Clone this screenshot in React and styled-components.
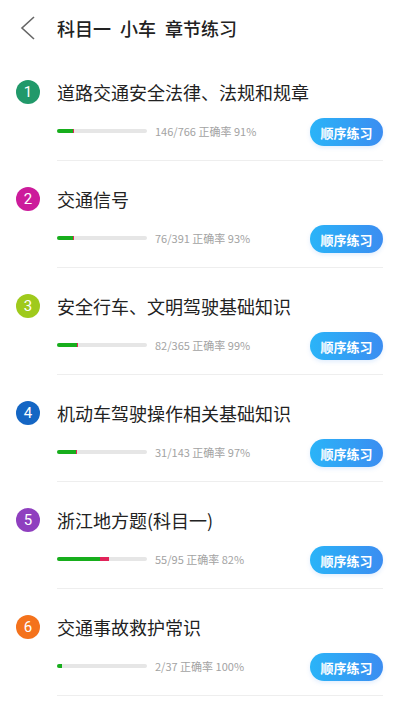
import React from "react";
import styled, { createGlobalStyle } from "styled-components";

const Global = createGlobalStyle`
  html, body { margin: 0; padding: 0; background: #fff; }
  body { font-family: "Noto Sans CJK SC", "Noto Sans", sans-serif; }
`;

const Page = styled.div`
  width: 400px;
  background: #fff;
`;

const Header = styled.div`
  height: 54px;
  display: flex;
  align-items: flex-start;
  padding-top: 15px;
  box-sizing: border-box;
`;

const Back = styled.div`
  width: 57px;
  height: 26px;
  display: flex;
  align-items: center;
  padding-left: 20px;
  box-sizing: border-box;
`;

const Title = styled.div`
  display: flex;
  gap: 9px;
  font-size: 18px;
  line-height: 26px;
  color: #222;
  font-weight: 500;
`;

const Item = styled.div`
  padding: 25px 17px 0 0;
  display: flex;
  flex-direction: column;
`;

const TitleRow = styled.div`
  display: flex;
  align-items: center;
  height: 26px;
`;

const Badge = styled.div`
  width: 24px;
  height: 24px;
  border-radius: 50%;
  background: ${(p) => p.$color};
  color: #fff;
  font-family: "Roboto", "Noto Sans", sans-serif;
  font-size: 15px;
  display: flex;
  align-items: center;
  justify-content: center;
  margin: 0 17px 0 16px;
`;

const ItemTitle = styled.div`
  font-size: 18px;
  color: #222;
  line-height: 26px;
`;

const Body = styled.div`
  margin-left: 57px;
  margin-top: 13px;
  padding-bottom: 14px;
  border-bottom: 1px solid #eeeeee;
  display: flex;
  align-items: center;
  height: 28px;
`;

const Track = styled.div`
  width: 90px;
  height: 4px;
  border-radius: 2px;
  background: #e6e6e6;
  display: flex;
  overflow: hidden;
  margin-top: -2px;
`;

const Seg = styled.div`
  height: 100%;
  background: ${(p) => p.$color};
`;

const Stats = styled.div`
  margin-left: 8px;
  font-size: 11px;
  color: #a3a3a3;
  flex: 1;
  margin-top: -2px;
`;

const Btn = styled.button`
  width: 73px;
  height: 28px;
  border: none;
  border-radius: 14px;
  background: linear-gradient(90deg, #2ab4f8 0%, #3b8df1 100%);
  color: #fff;
  font-family: "Noto Sans CJK SC", sans-serif;
  font-size: 13px;
  font-weight: 700;
  padding: 0;
  box-shadow: 0 2px 4px rgba(60, 140, 240, 0.15);
`;

const data = [
  { n: 1, color: "#21996a", title: "道路交通安全法律、法规和规章", done: 146, total: 766, rate: 91 },
  { n: 2, color: "#cc1b9b", title: "交通信号", done: 76, total: 391, rate: 93 },
  { n: 3, color: "#9fca1c", title: "安全行车、文明驾驶基础知识", done: 82, total: 365, rate: 99 },
  { n: 4, color: "#1466c4", title: "机动车驾驶操作相关基础知识", done: 31, total: 143, rate: 97 },
  { n: 5, color: "#8f3fbf", title: "浙江地方题(科目一)", done: 55, total: 95, rate: 82 },
  { n: 6, color: "#f4721c", title: "交通事故救护常识", done: 2, total: 37, rate: 100 },
];

export default function App() {
  return (
    <Page>
      <Global />
      <Header>
        <Back>
          <svg width="16" height="24" viewBox="0 0 16 24">
            <polyline points="14,1 2,12 14,23" fill="none" stroke="#666" strokeWidth="1.6" />
          </svg>
        </Back>
        <Title>
          <span>科目一</span>
          <span>小车</span>
          <span>章节练习</span>
        </Title>
      </Header>
      {data.map((d) => {
        const correct = Math.round(d.done * d.rate / 100);
        const wrong = d.done - correct;
        const g = Math.max((correct / d.total) * 90, 4);
        const r = (wrong / d.total) * 90;
        return (
          <Item key={d.n}>
            <TitleRow>
              <Badge $color={d.color}>{d.n}</Badge>
              <ItemTitle>{d.title}</ItemTitle>
            </TitleRow>
            <Body>
              <Track>
                <Seg $color="#17ae1c" style={{ width: g + "px" }} />
                <Seg $color="#e1245a" style={{ width: r + "px" }} />
              </Track>
              <Stats>{d.done}/{d.total} 正确率 {d.rate}%</Stats>
              <Btn>顺序练习</Btn>
            </Body>
          </Item>
        );
      })}
    </Page>
  );
}
